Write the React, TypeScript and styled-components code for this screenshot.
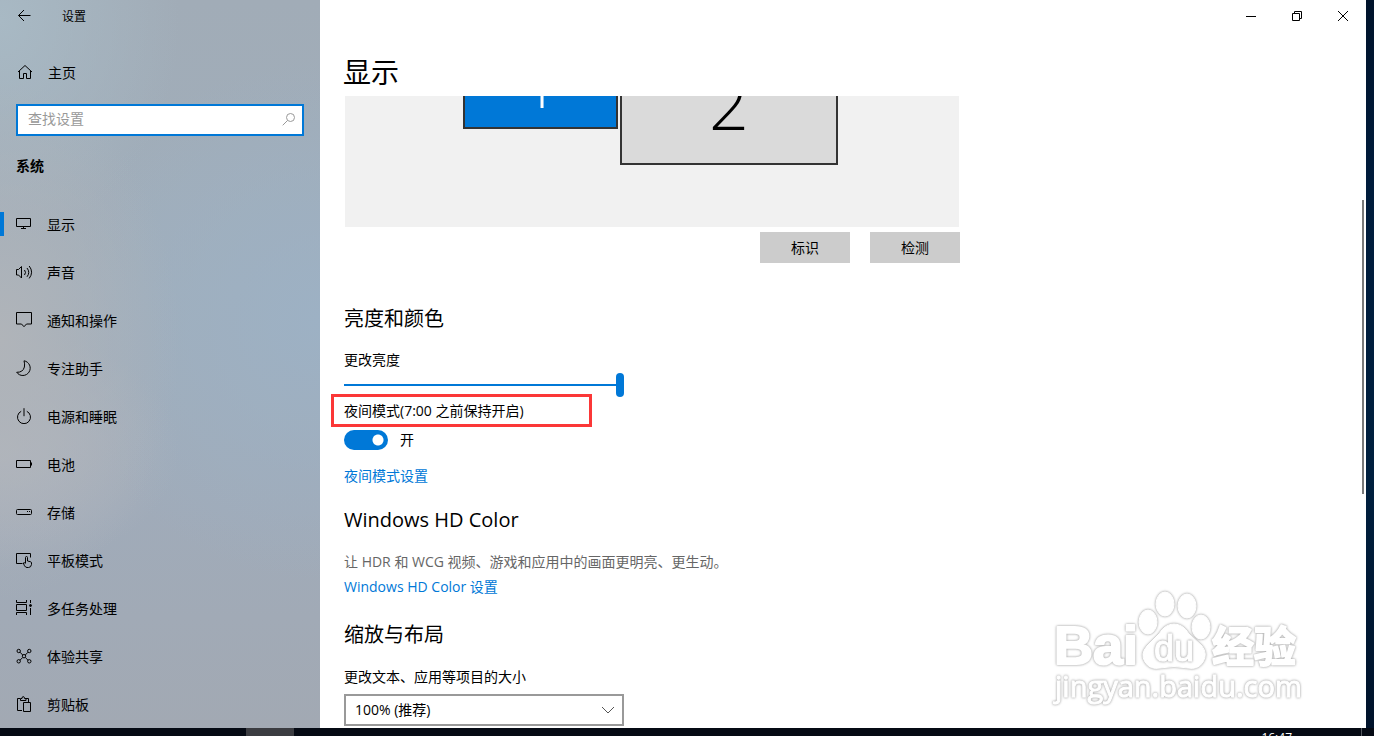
import React from "react";
import styled, { createGlobalStyle } from "styled-components";

const GlobalStyle = createGlobalStyle`
  *, *::before, *::after { box-sizing: border-box; }
  body {
    margin: 0;
    background: #001a36;
    color: #000;
    font: 14px/20px "Open Sans", "Noto Sans CJK SC", sans-serif;
  }
  button, input, select { font: inherit; color: inherit; }
  h1, h2, p, ul { margin: 0; padding: 0; font-weight: 400; }
`;

const ACCENT = "#0078d7";

const Desktop = styled.div`
  display: flex;
  flex-direction: column;
  height: 100vh;
  overflow: hidden;
  background: linear-gradient(180deg, #00132b 0%, #001c3c 25%, #00203f 65%, #00122a 100%);
`;

const Window = styled.div`
  flex: 1;
  min-height: 0;
  margin-right: 8px;
  display: flex;
  background: #fff;
  position: relative;
`;

const Sidebar = styled.aside`
  width: 320px;
  flex: none;
  display: flex;
  flex-direction: column;
  overflow: hidden;
  background:
    radial-gradient(ellipse 180px 260px at 0 340px, #b0b4b9 0%, #b0b4b900 100%),
    radial-gradient(ellipse 180px 120px at 0 450px, #b0b5be 0%, #b0b5be00 100%),
    radial-gradient(ellipse 180px 220px at 0 20px, #a8b9c4 0%, #a8b9c400 100%),
    radial-gradient(ellipse 260px 260px at 320px 320px, #9db1c4 0%, #9db1c400 100%),
    linear-gradient(180deg, #a1acb7 0%, #a0aebb 40%, #a0abb9 70%, #a2a9b3 100%);
`;

const TitleBar = styled.header`
  flex: none;
  height: 32px;
  display: flex;
  align-items: center;
  font-size: 12px;
`;

const PlainButton = styled.button`
  border: 0;
  padding: 0;
  background: transparent;
  display: flex;
  align-items: center;
  justify-content: center;
`;

const BackButton = styled(PlainButton)`
  width: 48px;
  height: 32px;
  margin-right: 14px;
`;

const CaptionButton = styled(PlainButton)`
  width: 46px;
  height: 32px;
`;

const ItemText = styled.span`
  padding-top: 2px;
`;

const HomeLink = styled.a`
  display: flex;
  align-items: center;
  gap: 15px;
  height: 48px;
  margin-top: 16px;
  padding-left: 16px;
  color: inherit;
  text-decoration: none;
`;

const SearchBox = styled.label`
  display: flex;
  align-items: center;
  height: 32px;
  margin: 8px 16px 0;
  padding: 0 6px 2px 10px;
  border: 2px solid ${ACCENT};
  background: #fff;
`;

const SearchInput = styled.input`
  flex: 1;
  min-width: 0;
  border: 0;
  padding: 0;
  outline: 0;
  background: transparent;
  &::placeholder { color: #999; opacity: 1; }
`;

const GroupTitle = styled.h2`
  margin: 20px 16px 24px;
  font-weight: 700;
  font-size: 14px;
  line-height: 20px;
`;

const NavList = styled.ul`
  list-style: none;
`;

const NavLink = styled.a<{ $active?: boolean }>`
  display: flex;
  align-items: center;
  gap: 14px;
  height: 48px;
  padding-left: 15px;
  color: inherit;
  text-decoration: none;
  background: ${(p) => (p.$active ? `linear-gradient(${ACCENT}, ${ACCENT}) 0 12px / 4px 24px no-repeat` : "none")};
`;

const Icon = styled.svg`
  flex: none;
  display: block;
  fill: none;
  stroke: currentColor;
  stroke-width: 1;
`;

const Main = styled.main`
  flex: 1;
  min-width: 0;
  display: flex;
  flex-direction: column;
`;

const Captions = styled(TitleBar)`
  justify-content: flex-end;
`;

const PageTitle = styled.h1`
  flex: none;
  height: 64px;
  padding: 20px 23px 0;
  font-size: 28px;
  line-height: 40px;
`;

const Content = styled.div`
  flex: 1;
  min-height: 0;
  overflow: hidden;
  padding-left: 24px;
`;

const Section = styled.section`
  max-width: 616px;
  display: flex;
  flex-direction: column;
  align-items: flex-start;
`;

const Arrangement = styled.div`
  position: relative;
  align-self: stretch;
  height: 131px;
  margin: 0 1px;
  overflow: hidden;
  background: #f1f1f1;
`;

const Monitor = styled.div<{ $left: number; $width: number; $height: number; $primary?: boolean }>`
  position: absolute;
  top: -54px;
  left: ${(p) => p.$left}px;
  width: ${(p) => p.$width}px;
  height: ${(p) => p.$height}px;
  display: flex;
  align-items: center;
  justify-content: center;
  padding-bottom: 2px;
  border: 2px solid #333;
  background: ${(p) => (p.$primary ? ACCENT : "#dadada")};
  color: ${(p) => (p.$primary ? "#fff" : "#000")};
  font-size: ${(p) => (p.$primary ? 60 : 70)}px;
  line-height: 80px;
  font-weight: 300;
`;

const Actions = styled.div`
  align-self: stretch;
  display: flex;
  justify-content: flex-end;
  gap: 20px;
  margin-top: 5px;
`;

const ActionButton = styled.button`
  width: 90px;
  height: 31px;
  border: 0;
  padding: 0;
  background: #ccc;
`;

const Heading = styled.h2<{ $top: number }>`
  margin-top: ${(p) => p.$top}px;
  font-size: 20px;
  line-height: 28px;
`;

const Label = styled.label<{ $top: number }>`
  position: relative;
  margin-top: ${(p) => p.$top}px;
`;

const Slider = styled.input`
  appearance: none;
  width: 280px;
  height: 24px;
  margin: 3px 0 0;
  background: linear-gradient(${ACCENT}, ${ACCENT}) 0 11px / 100% 2px no-repeat;
  &::-webkit-slider-thumb {
    appearance: none;
    width: 8px;
    height: 24px;
    border-radius: 4px;
    background: ${ACCENT};
  }
`;

const Highlight = styled.span`
  position: absolute;
  left: -13px;
  top: -7px;
  width: 261px;
  height: 33px;
  border: 3px solid #fb3737;
  pointer-events: none;
`;

const ToggleRow = styled.div`
  display: flex;
  align-items: center;
  gap: 12px;
  margin-top: 9px;
`;

const Toggle = styled.input`
  appearance: none;
  width: 44px;
  height: 20px;
  margin: 0;
  border-radius: 10px;
  background: radial-gradient(circle at 34px 10px, #fff 5px, ${ACCENT} 6px);
`;

const TextLink = styled.a<{ $top: number }>`
  margin-top: ${(p) => p.$top}px;
  color: ${ACCENT};
  text-decoration: none;
`;

const Note = styled.p`
  margin-top: 18px;
  color: #666;
`;

const SelectWrap = styled.div`
  display: grid;
  align-items: center;
  width: 280px;
  margin-top: 7px;
  & > * { grid-area: 1 / 1; }
  & > svg { justify-self: end; margin-right: 9px; pointer-events: none; color: #555; }
`;

const Select = styled.select`
  appearance: none;
  width: 100%;
  height: 32px;
  padding: 0 9px;
  border: 2px solid #999;
  border-radius: 0;
  background: #fff;
`;

const ScrollThumb = styled.div`
  position: absolute;
  top: 200px;
  right: 2px;
  width: 2px;
  height: 294px;
  background: #7a7a7a;
`;

const Watermark = styled.svg`
  position: absolute;
  right: 60px;
  bottom: 18px;
  pointer-events: none;
  fill: #fff;
  stroke: #fff;
  stroke-linejoin: round;
  & > g { filter: drop-shadow(0 0 1px #aaa) drop-shadow(0 0 1px #ddd); }
`;

const Taskbar = styled.footer`
  flex: none;
  height: 8px;
  display: flex;
  overflow: hidden;
  background: #050a14;
`;

const TaskButton = styled.button`
  width: 48px;
  height: 8px;
  margin-left: 246px;
  border: 0;
  padding: 0;
  background: #3b3c41;
`;

const Clock = styled.time`
  margin-left: auto;
  margin-right: 12px;
  padding-right: 69px;
  border-right: 1px solid #55585e;
  color: #fff;
  font-size: 12px;
  line-height: 20px;
`;

const navItems: { label: string; icon: React.ReactNode }[] = [
  { label: "显示", icon: <path d="M1.500 2.500h14v8h-14zM8.500 10.500v2M6 12.500h5" /> },
  {
    label: "声音",
    icon: (
      <path d="M1.500 5.500h2L6.500 2.500v11.500L3.500 11h-2zM9.500 6q2 2.500 0 5M12 4q3.500 4.400 0 8.800M14.200 2q4.800 6.200 0 12.400" />
    ),
  },
  { label: "通知和操作", icon: <path d="M1.500.5h15v11.500h-5L9 14.700 6.500 12h-5z" /> },
  { label: "专注助手", icon: <path d="M9 .8A7.400 7.400 0 1 1 1.700 12.300Q8 12.500 9.400 7 10 3.800 9 .8z" /> },
  { label: "电源和睡眠", icon: <path d="M6.200 3.300a6.500 6.500 0 1 0 5.600 0M9 .2v8" /> },
  { label: "电池", icon: <path d="M1.500 4.500h14v7h-14zM16.500 6.500v3" /> },
  {
    label: "存储",
    icon: (
      <>
        <rect x="1.500" y="5.500" width="15" height="5" rx="1" />
        <path d="M12 7.500h1M14 7.500h1" />
      </>
    ),
  },
  {
    label: "平板模式",
    icon: (
      <path d="M7.500 11.500h-6v-10h14v4M10.500 11V5.500q0-1 1-1t1 1V9l3 .7q1 .3 1 1.300v1.500q-.5 3-3 3h-1.500q-1.500 0-2.500-1.700L8.300 11q.7-1 2.200.5" />
    ),
  },
  {
    label: "多任务处理",
    icon: (
      <>
        <path d="M1.500 0v2.500h10V0M1.500 15v-2.500h10V15M1.500 4.500h10v6h-10zM15.500 0v3M15.500 8v7" />
        <circle cx="15.500" cy="5.500" r="1" fill="currentColor" />
      </>
    ),
  },
  {
    label: "体验共享",
    icon: (
      <>
        <circle cx="3.700" cy="3" r="1.700" />
        <circle cx="14.300" cy="3" r="1.700" />
        <circle cx="3.700" cy="13.300" r="1.700" />
        <circle cx="14.300" cy="13.300" r="1.700" />
        <circle cx="9" cy="8.200" r="1.700" />
        <path d="M5 4.200 7.700 7M13 4.200 10.300 7M5 12.200l2.700-2.700M13 12.200l-2.700-2.700" />
      </>
    ),
  },
  {
    label: "剪贴板",
    icon: (
      <path d="M7 14.500H2.500v-12H5M11 2.500h2.500V6M5.500 4.500v-2H7q0-2 1.200-2t1.300 2H11v2zM8.500 6.500h7v9h-7z" />
    ),
  },
];

export default function App() {
  return (
    <>
      <GlobalStyle />
      <Desktop>
        <Window>
          <Sidebar>
            <TitleBar>
              <BackButton aria-label="返回">
                <Icon width="14" height="14" viewBox="0 0 14 14">
                  <path d="M1.500 6.500h12M7 1 1.500 6.500 7 12" />
                </Icon>
              </BackButton>
              <ItemText>设置</ItemText>
            </TitleBar>
            <HomeLink href="#home">
              <Icon width="17" height="16" viewBox="0 0 17 16">
                <path d="M2 8 9 1.500 16 8M3.500 7v7.500h4V9.500h3v5h4V7" />
              </Icon>
              <ItemText>主页</ItemText>
            </HomeLink>
            <SearchBox>
              <SearchInput type="text" placeholder="查找设置" aria-label="查找设置" />
              <Icon width="14" height="14" viewBox="0 0 14 14" color="#999">
                <circle cx="8.500" cy="5.500" r="4" />
                <path d="M5.500 8.500.7 13.300" />
              </Icon>
            </SearchBox>
            <GroupTitle>系统</GroupTitle>
            <NavList>
              {navItems.map((item, i) => (
                <li key={item.label}>
                  <NavLink href={`#${i}`} $active={i === 0}>
                    <Icon width="18" height="16" viewBox="0 0 18 16">
                      {item.icon}
                    </Icon>
                    <ItemText>{item.label}</ItemText>
                  </NavLink>
                </li>
              ))}
            </NavList>
          </Sidebar>
          <Main>
            <Captions>
              <CaptionButton aria-label="最小化">
                <Icon width="10" height="10" viewBox="0 0 10 10">
                  <path d="M0 5.500h10" />
                </Icon>
              </CaptionButton>
              <CaptionButton aria-label="还原">
                <Icon width="10" height="10" viewBox="0 0 10 10">
                  <path d="M.5 2.500h7v7h-7zM2.500 2.500v-2h7v7h-2" />
                </Icon>
              </CaptionButton>
              <CaptionButton aria-label="关闭">
                <Icon width="10" height="10" viewBox="0 0 10 10">
                  <path d="M0 0l10 10M10 0 0 10" />
                </Icon>
              </CaptionButton>
            </Captions>
            <PageTitle>显示</PageTitle>
            <Content>
              <Section>
                <Arrangement>
                  <Monitor $left={118} $width={155} $height={87} $primary>1</Monitor>
                  <Monitor $left={275} $width={218} $height={123}>2</Monitor>
                </Arrangement>
                <Actions>
                  <ActionButton>标识</ActionButton>
                  <ActionButton>检测</ActionButton>
                </Actions>
              </Section>
              <Section>
                <Heading $top={42}>亮度和颜色</Heading>
                <Label $top={17} htmlFor="brightness">更改亮度</Label>
                <Slider id="brightness" type="range" min="0" max="100" defaultValue="100" />
                <Label $top={4} htmlFor="night">
                  夜间模式(7:00 之前保持开启)
                  <Highlight />
                </Label>
                <ToggleRow>
                  <Toggle id="night" type="checkbox" role="switch" defaultChecked />
                  <span>开</span>
                </ToggleRow>
                <TextLink $top={16} href="#night-settings">夜间模式设置</TextLink>
              </Section>
              <Section>
                <Heading $top={20}>Windows HD Color</Heading>
                <Note>让 HDR 和 WCG 视频、游戏和应用中的画面更明亮、更生动。</Note>
                <TextLink $top={5} href="#hd-color">Windows HD Color 设置</TextLink>
              </Section>
              <Section>
                <Heading $top={24}>缩放与布局</Heading>
                <Label $top={18} htmlFor="scale">更改文本、应用等项目的大小</Label>
                <SelectWrap>
                  <Select id="scale" defaultValue="100">
                    <option value="100">100% (推荐)</option>
                    <option value="125">125%</option>
                  </Select>
                  <Icon width="14" height="8" viewBox="0 0 14 8">
                    <path d="M1 1l6 6 6-6" />
                  </Icon>
                </SelectWrap>
              </Section>
            </Content>
          </Main>
          <ScrollThumb />
          <Watermark width="256" height="126" viewBox="0 0 256 126" aria-hidden="true">
            <g strokeWidth="2">
              <text x="4" y="80" fontFamily="Liberation Sans" fontWeight="700" fontSize="54">Bai</text>
              <text x="162" y="78" fontFamily="Noto Sans CJK SC" fontWeight="700" fontSize="42">经验</text>
            </g>
            <g strokeWidth="1">
              <text x="5" y="113" fontFamily="Open Sans" fontSize="29">jingyan.baidu.com</text>
            </g>
            <g strokeWidth="1">
              <ellipse cx="98" cy="38" rx="9" ry="12" />
              <ellipse cx="115" cy="20" rx="9" ry="12" />
              <ellipse cx="137" cy="22" rx="9" ry="12" />
              <ellipse cx="151" cy="43" rx="9" ry="12" />
              <path d="M124 40q9 0 15 10l13 12q6 8 1 16-5 8-15 6-14-3-28 0-10 2-15-6-5-8 2-16l12-12q6-10 15-10z" />
            </g>
            <g strokeWidth="1">
              <text x="104" y="77" fontFamily="Liberation Sans" fontSize="36">du</text>
            </g>
          </Watermark>
        </Window>
        <Taskbar>
          <TaskButton aria-label="设置" />
          <Clock>16:47</Clock>
        </Taskbar>
      </Desktop>
    </>
  );
}
